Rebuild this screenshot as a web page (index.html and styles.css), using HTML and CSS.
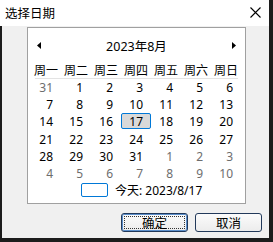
FILE: index.html
```html
<!DOCTYPE html>
<html lang="zh-CN">
<head>
  <meta charset="UTF-8" />
  <title>选择日期</title>
  <link rel="stylesheet" href="styles.css">
</head>
<body>
  <div class="window">
    <div class="titlebar">
      <span class="title">选择日期</span>
      <svg class="close" width="11" height="11" viewBox="0 0 11 11">
        <path d="M0.5 0.5 L10.5 10.5 M10.5 0.5 L0.5 10.5" stroke="#000" stroke-width="1.1" fill="none"/>
      </svg>
    </div>

    <div class="body">
      <div class="content">
        <div class="calendar">
          <div class="cal-head">
            <svg class="arrow" width="4" height="7" viewBox="0 0 4 7"><path d="M4 0 L0 3.5 L4 7 Z" fill="#000"/></svg>
            <span class="month">2023年8月</span>
            <svg class="arrow" width="4" height="7" viewBox="0 0 4 7"><path d="M0 0 L4 3.5 L0 7 Z" fill="#000"/></svg>
          </div>

          <div class="weekdays">
            <span>周一</span><span>周二</span><span>周三</span><span>周四</span><span>周五</span><span>周六</span><span>周日</span>
          </div>
          <div class="rule"></div>

          <div class="days">
            <span class="other">31</span><span>1</span><span>2</span><span>3</span><span>4</span><span>5</span><span>6</span>
            <span>7</span><span>8</span><span>9</span><span>10</span><span>11</span><span>12</span><span>13</span>
            <span>14</span><span>15</span><span>16</span><span class="sel">17</span><span>18</span><span>19</span><span>20</span>
            <span>21</span><span>22</span><span>23</span><span>24</span><span>25</span><span>26</span><span>27</span>
            <span>28</span><span>29</span><span>30</span><span>31</span><span class="other">1</span><span class="other">2</span><span class="other">3</span>
            <span class="other">4</span><span class="other">5</span><span class="other">6</span><span class="other">7</span><span class="other">8</span><span class="other">9</span><span class="other">10</span>
          </div>

          <div class="today">
            <span class="today-box"></span>
            <span>今天: 2023/8/17</span>
          </div>
        </div>
      </div>

      <div class="buttons">
        <button class="btn default"><span class="focus">确定</span></button>
        <button class="btn"><span>取消</span></button>
      </div>
    </div>
  </div>
</body>
</html>
```

FILE: styles.css
```css
body {
  margin: 0;
  width: 273px;
  height: 242px;
  background: #1c1c1c;
  font-family: 'Noto Sans', 'Noto Sans CJK SC', sans-serif;
  color: #000;
  overflow: hidden;
}
.window {
  width: 269px;
  height: 238px;
  background: #f0f0f0;
  display: flex;
  flex-direction: column;
}
.titlebar {
  height: 26px;
  background: #fff;
  display: flex;
  align-items: center;
  justify-content: space-between;
  padding: 0 8px 0 5px;
  box-sizing: border-box;
}
.title {
  font-family: 'Noto Sans CJK SC', sans-serif;
  font-size: 12.5px;
  margin-top: -1px;
}
.close {
  margin-top: -2px;
}
.body {
  flex: 1;
  border-left: 2px solid #1c1c1c;
}
.content {
  padding: 1px 0 0 25px;
}
.calendar {
  width: 219px;
  height: 177px;
  box-sizing: border-box;
  border: 1px solid #a0a0a0;
  background: #fff;
}
.cal-head {
  height: 30px;
  margin-top: 2px;
  display: flex;
  align-items: center;
  justify-content: space-between;
  padding: 0 9px;
}
.month {
  font-size: 12.5px;
}
.weekdays, .days {
  display: grid;
  grid-template-columns: repeat(7, 30px);
  padding: 0 3px;
}
.weekdays {
  height: 18px;
  align-items: center;
}
.weekdays span {
  font-family: 'Noto Sans CJK SC', sans-serif;
  font-size: 12px;
  text-align: center;
}
.rule {
  height: 1px;
  margin: 0 7px;
  background: #e3e3e3;
}
.days {
  grid-auto-rows: 17.2px;
}
.days span {
  font-size: 12px;
  display: flex;
  align-items: center;
  justify-content: flex-end;
  padding-right: 8px;
}
.days .other {
  color: #6d6d6d;
}
.days .sel {
  align-self: start;
  height: 16px;
  box-sizing: border-box;
  border: 1px solid #0078d7;
  border-radius: 2px;
  background: #d9d9d9;
  padding-right: 7px;
}
.today {
  height: 16px;
  display: flex;
  align-items: center;
  gap: 7px;
  padding-left: 53px;
  font-size: 12px;
}
.today-box {
  width: 27px;
  height: 14px;
  box-sizing: border-box;
  border: 1px solid #0078d7;
  border-radius: 2px;
}
.buttons {
  display: flex;
  justify-content: flex-end;
  gap: 7px;
  padding: 9px 7px 0 0;
}
.btn {
  width: 67px;
  height: 19px;
  padding: 0;
  border: 1px solid #22395a;
  border-radius: 3px;
  background: linear-gradient(#fbfbfb, #ececec);
  font-family: 'Noto Sans CJK SC', sans-serif;
  font-size: 12.5px;
  display: flex;
  align-items: stretch;
  justify-content: center;
}
.btn span {
  flex: 1;
  display: flex;
  align-items: center;
  justify-content: center;
}
.btn.default {
  box-shadow: inset 0 0 0 1px #5c8fcb;
}
.btn .focus {
  margin: 2px;
  border: 1px dotted #333;
}
```
